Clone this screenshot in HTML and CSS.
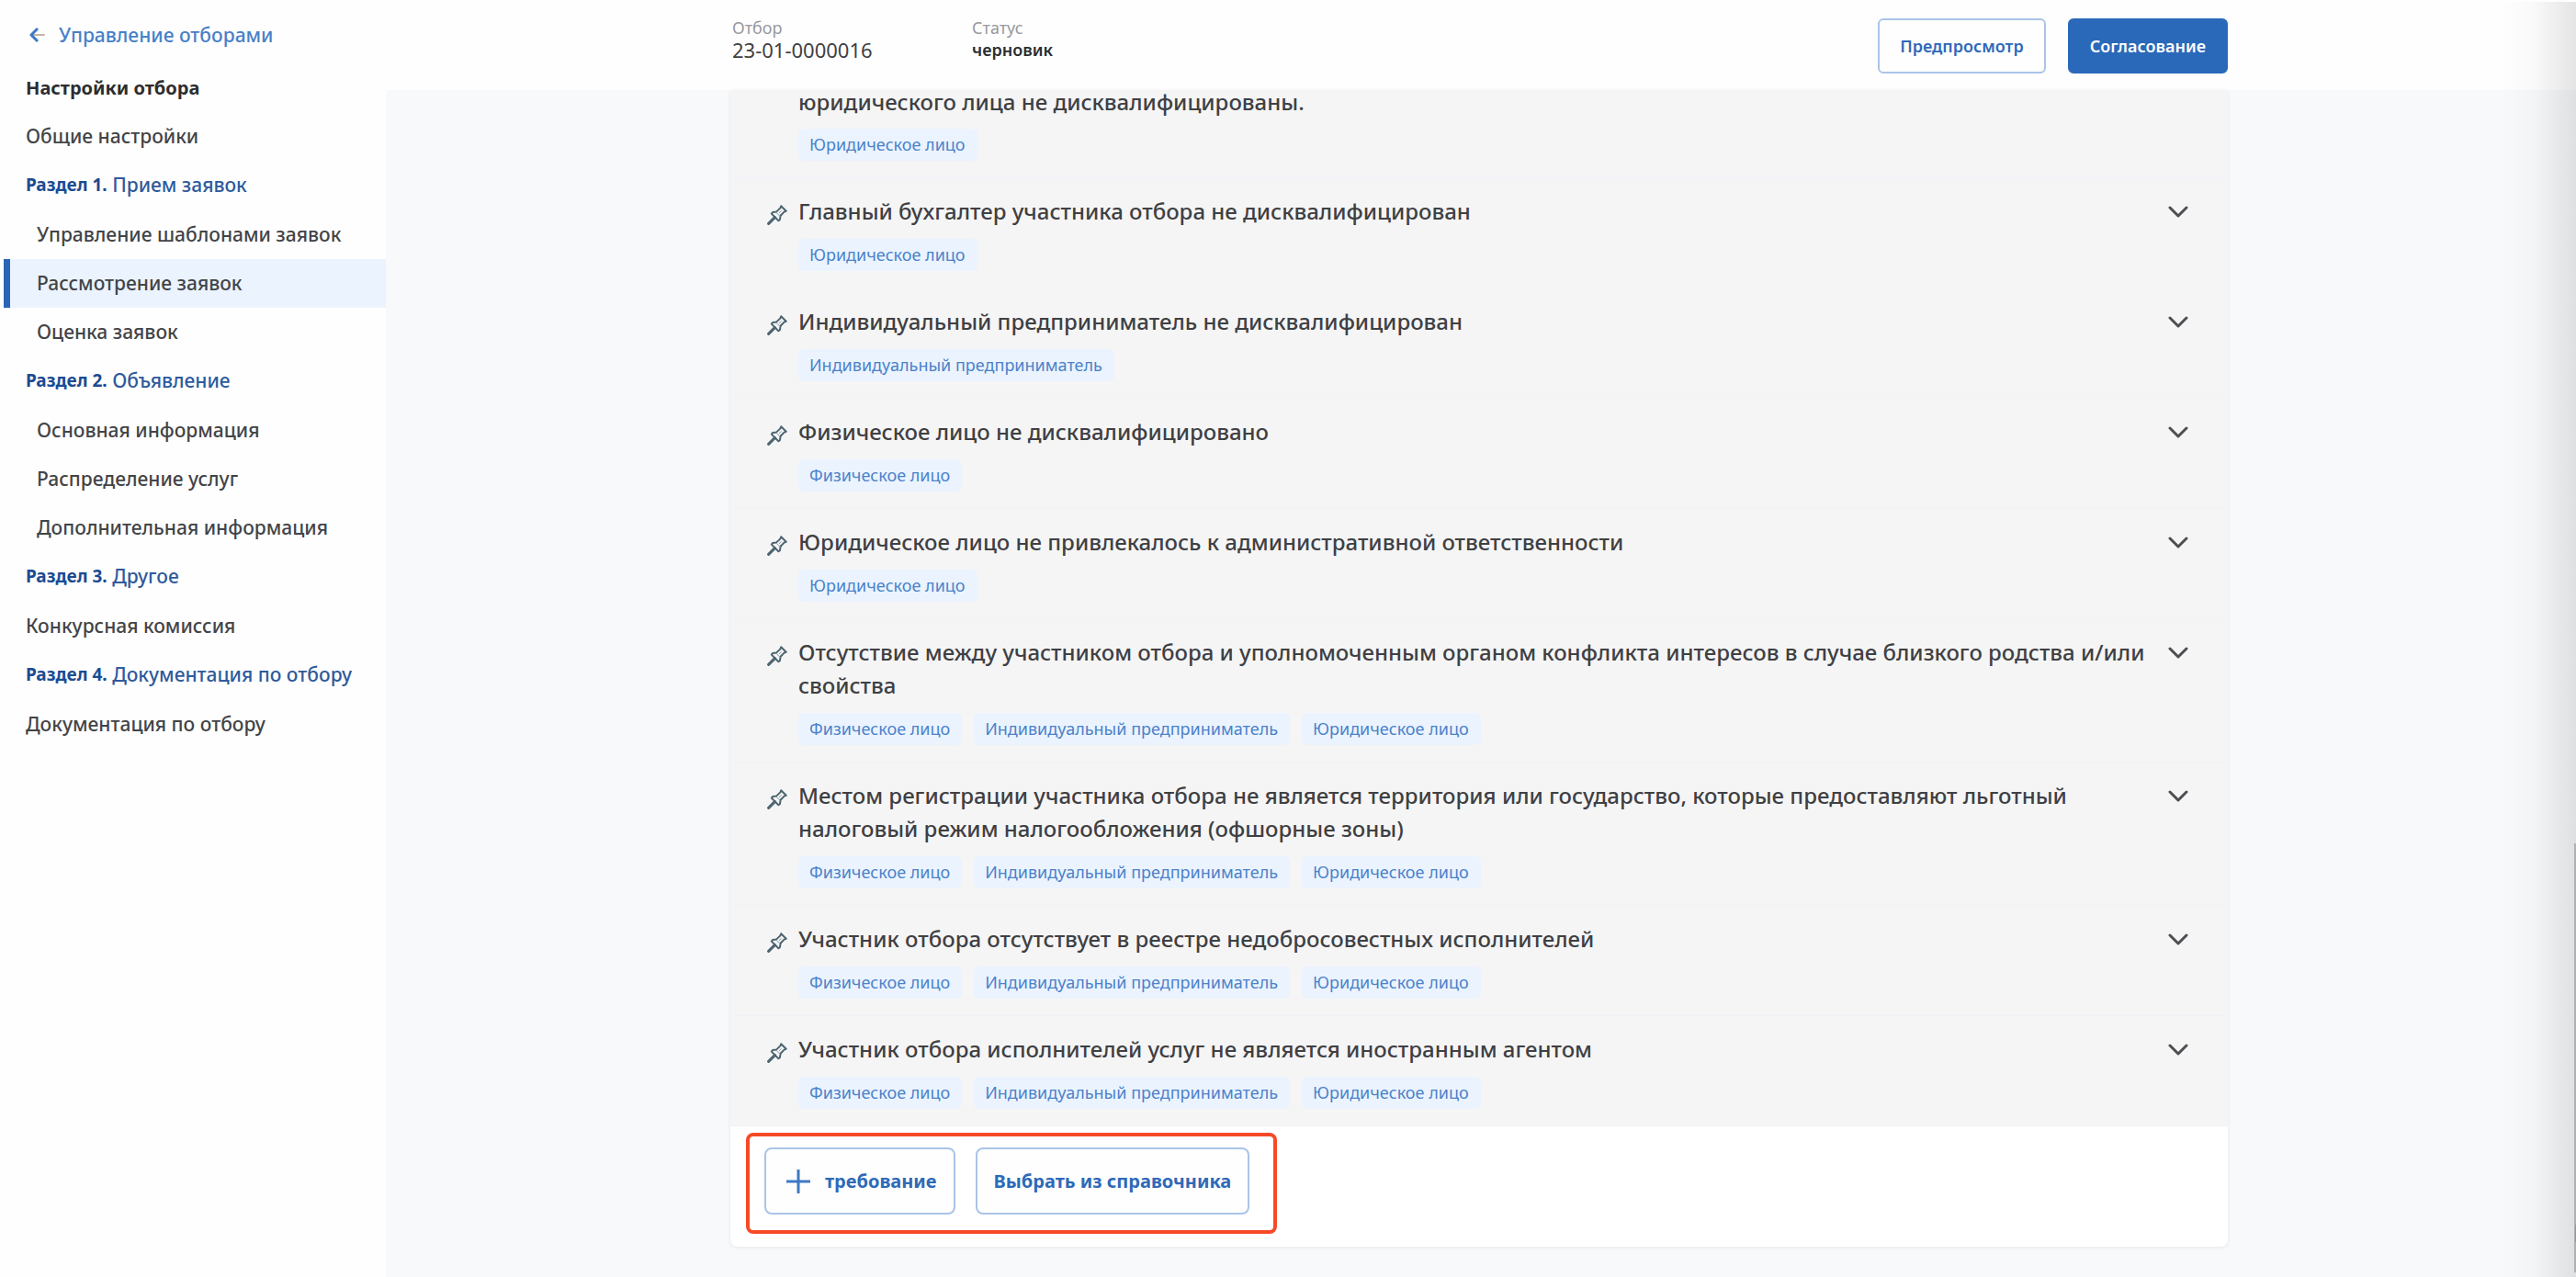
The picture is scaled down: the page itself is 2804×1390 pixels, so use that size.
FILE: index.html
```html
<!DOCTYPE html>
<html lang="ru">
<head>
<meta charset="utf-8">
<title>Рассмотрение заявок</title>
<link rel="stylesheet" href="styles.css">
</head>
<body>
<svg class="sprite" aria-hidden="true">
  <symbol id="pin" viewBox="0 0 22 22">
    <path d="M15.2 1.3 20.7 6.8 18.6 7.6 14.6 11.8 13.9 16.1 12.4 17.2 4.8 9.6 6 8.1 10.2 7.4 14.4 3.4Z" fill="none" stroke="#4d6470" stroke-width="2" stroke-linejoin="round"/>
    <path d="M10 8.2 14 12.2M13 8.8 15.6 6.4" fill="none" stroke="#8a9aa3" stroke-width="1"/>
    <path d="M8.4 13.6 1.6 20.4" fill="none" stroke="#4d6470" stroke-width="3" stroke-linecap="round"/>
  </symbol>
  <symbol id="chevron" viewBox="0 0 22 14">
    <path d="M2 2 11 11 20 2" fill="none" stroke="#4c4e52" stroke-width="3" stroke-linecap="round" stroke-linejoin="round"/>
  </symbol>
</svg>
<div class="app">
  <nav class="sidebar">
    <a class="back" href="#">
      <svg class="back-icon" viewBox="0 0 18 18" aria-hidden="true"><path d="M4 9H16" stroke="#c6b5a8" stroke-width="2" stroke-linecap="round"/><path d="M9 2 2 9 9 16" fill="none" stroke="#3f78c4" stroke-width="3" stroke-linejoin="round"/></svg>
      Управление отборами
    </a>
    <h2 class="nav-title">Настройки отбора</h2>
    <a class="nav-item" href="#">Общие настройки</a>
    <h3 class="nav-section"><b>Раздел 1.</b> Прием заявок</h3>
    <a class="nav-item nested" href="#">Управление шаблонами заявок</a>
    <a class="nav-item nested current" href="#" aria-current="page">Рассмотрение заявок</a>
    <a class="nav-item nested" href="#">Оценка заявок</a>
    <h3 class="nav-section"><b>Раздел 2.</b> Объявление</h3>
    <a class="nav-item nested" href="#">Основная информация</a>
    <a class="nav-item nested" href="#">Распределение услуг</a>
    <a class="nav-item nested" href="#">Дополнительная информация</a>
    <h3 class="nav-section"><b>Раздел 3.</b> Другое</h3>
    <a class="nav-item" href="#">Конкурсная комиссия</a>
    <h3 class="nav-section"><b>Раздел 4.</b> Документация по отбору</h3>
    <a class="nav-item" href="#">Документация по отбору</a>
  </nav>
  <div class="content">
    <header class="topbar">
      <div class="topbar-inner">
        <dl class="facts">
          <div class="fact"><dt>Отбор</dt><dd class="number">23-01-0000016</dd></div>
          <div class="fact"><dt>Статус</dt><dd class="status">черновик</dd></div>
        </dl>
        <div class="actions">
          <button class="button" type="button">Предпросмотр</button>
          <button class="button primary" type="button">Согласование</button>
        </div>
      </div>
    </header>
    <main class="scroll">
      <section class="card">
        <ul class="list">
          <li class="row continued">
            <div class="body"><p class="title">юридического лица не дисквалифицированы.</p>
              <div class="tags"><span class="tag">Юридическое лицо</span></div></div>
          </li>
          <li class="row">
            <svg class="pin" aria-hidden="true"><use href="#pin"/></svg>
            <div class="body"><p class="title">Главный бухгалтер участника отбора не дисквалифицирован</p>
              <div class="tags"><span class="tag">Юридическое лицо</span></div></div>
            <button class="toggle" type="button" aria-label="Развернуть"><svg class="chevron"><use href="#chevron"/></svg></button>
          </li>
          <li class="row">
            <svg class="pin" aria-hidden="true"><use href="#pin"/></svg>
            <div class="body"><p class="title">Индивидуальный предприниматель не дисквалифицирован</p>
              <div class="tags"><span class="tag">Индивидуальный предприниматель</span></div></div>
            <button class="toggle" type="button" aria-label="Развернуть"><svg class="chevron"><use href="#chevron"/></svg></button>
          </li>
          <li class="row">
            <svg class="pin" aria-hidden="true"><use href="#pin"/></svg>
            <div class="body"><p class="title">Физическое лицо не дисквалифицировано</p>
              <div class="tags"><span class="tag">Физическое лицо</span></div></div>
            <button class="toggle" type="button" aria-label="Развернуть"><svg class="chevron"><use href="#chevron"/></svg></button>
          </li>
          <li class="row">
            <svg class="pin" aria-hidden="true"><use href="#pin"/></svg>
            <div class="body"><p class="title">Юридическое лицо не привлекалось к административной ответственности</p>
              <div class="tags"><span class="tag">Юридическое лицо</span></div></div>
            <button class="toggle" type="button" aria-label="Развернуть"><svg class="chevron"><use href="#chevron"/></svg></button>
          </li>
          <li class="row">
            <svg class="pin" aria-hidden="true"><use href="#pin"/></svg>
            <div class="body"><p class="title">Отсутствие между участником отбора и уполномоченным органом конфликта интересов в случае близкого родства и/или свойства</p>
              <div class="tags"><span class="tag">Физическое лицо</span><span class="tag">Индивидуальный предприниматель</span><span class="tag">Юридическое лицо</span></div></div>
            <button class="toggle" type="button" aria-label="Развернуть"><svg class="chevron"><use href="#chevron"/></svg></button>
          </li>
          <li class="row">
            <svg class="pin" aria-hidden="true"><use href="#pin"/></svg>
            <div class="body"><p class="title">Местом регистрации участника отбора не является территория или государство, которые предоставляют льготный налоговый режим налогообложения (офшорные зоны)</p>
              <div class="tags"><span class="tag">Физическое лицо</span><span class="tag">Индивидуальный предприниматель</span><span class="tag">Юридическое лицо</span></div></div>
            <button class="toggle" type="button" aria-label="Развернуть"><svg class="chevron"><use href="#chevron"/></svg></button>
          </li>
          <li class="row">
            <svg class="pin" aria-hidden="true"><use href="#pin"/></svg>
            <div class="body"><p class="title">Участник отбора отсутствует в реестре недобросовестных исполнителей</p>
              <div class="tags"><span class="tag">Физическое лицо</span><span class="tag">Индивидуальный предприниматель</span><span class="tag">Юридическое лицо</span></div></div>
            <button class="toggle" type="button" aria-label="Развернуть"><svg class="chevron"><use href="#chevron"/></svg></button>
          </li>
          <li class="row">
            <svg class="pin" aria-hidden="true"><use href="#pin"/></svg>
            <div class="body"><p class="title">Участник отбора исполнителей услуг не является иностранным агентом</p>
              <div class="tags"><span class="tag">Физическое лицо</span><span class="tag">Индивидуальный предприниматель</span><span class="tag">Юридическое лицо</span></div></div>
            <button class="toggle" type="button" aria-label="Развернуть"><svg class="chevron"><use href="#chevron"/></svg></button>
          </li>
        </ul>
        <footer class="card-footer">
          <div class="highlight">
            <button class="button large" type="button"><svg class="plus" viewBox="0 0 26 26" aria-hidden="true"><path d="M13 0V26M0 13H26" stroke="#3f78c4" stroke-width="3"/></svg>требование</button>
            <button class="button large" type="button">Выбрать из справочника</button>
          </div>
        </footer>
      </section>
    </main>
  </div>
  <div class="edge-shade"><span class="edge-line"></span><span class="edge-mark"></span></div>
</div>
</body>
</html>
```
FILE: styles.css
```css
* {
  box-sizing: border-box;
}

body,
h2,
h3,
p,
dl,
dd,
ul {
  margin: 0;
  padding: 0;
}

body {
  font-family: "Noto Sans", "Open Sans", sans-serif;
  color: #3f4043;
  background: #f8f9fb;
}

.sprite {
  display: none;
}

.app {
  position: relative;
  display: flex;
  min-height: 100vh;
}

/* Sidebar */

.sidebar {
  flex: none;
  width: 420px;
  padding: 18px 0 0 4px;
  background: #fefefe;
  font-size: 21px;
  font-weight: 500;
}

.back,
.nav-title,
.nav-item,
.nav-section {
  display: flex;
  align-items: center;
  text-decoration: none;
  white-space: pre-wrap;
}

.back {
  gap: 14px;
  height: 40px;
  padding-left: 28px;
  color: #4880c8;
  white-space: normal;
}

.back-icon {
  width: 18px;
  height: 18px;
}

.nav-title {
  height: 50px;
  margin: 12px 0 2px;
  padding-left: 24px;
  color: #2c2d30;
  font-size: 20px;
  font-weight: 700;
}

.nav-item {
  height: 53px;
  padding: 0 0 2px 24px;
  color: #434447;
}

.nav-section {
  height: 54px;
  padding: 0 0 2px 24px;
  color: #2f5a9c;
  font-size: 21px;
  font-weight: 500;
}

.nav-section b {
  color: #1c4b92;
  font-size: 19px;
  font-weight: 700;
}

.nested {
  padding-left: 36px;
}

.current {
  padding-left: 29px;
  border-left: 7px solid #2a66b7;
  background: #ebf3fe;
}

/* Header */

.content {
  display: flex;
  flex: 1;
  flex-direction: column;
  min-width: 0;
}

.topbar {
  flex: none;
  padding: 0 8px 0 4px;
  background: #fefefe;
}

.topbar-inner,
.card {
  width: 100%;
  max-width: 1630px;
  margin: 0 auto;
}

.topbar-inner {
  display: flex;
  align-items: flex-start;
  justify-content: space-between;
  padding: 18px 0;
}

.facts {
  display: flex;
}

.fact {
  min-width: 261px;
  padding-left: 2px;
  line-height: 24px;
}

.fact dt {
  color: #97999f;
  font-size: 18px;
}

.number {
  font-size: 22px;
}

.status {
  color: #2c2d30;
  font-size: 18px;
  font-weight: 600;
}

.actions {
  display: flex;
  gap: 24px;
  padding-top: 2px;
}

.button {
  display: flex;
  align-items: center;
  justify-content: center;
  height: 60px;
  padding: 0 22px;
  border: 2px solid #a9c4e8;
  border-radius: 6px;
  background: #fefefe;
  color: #2f69b8;
  font: 600 18px "Noto Sans", "Open Sans", sans-serif;
}

.primary {
  border-color: #2a69b9;
  background: #2a69b9;
  color: #fff;
}

/* Requirements list */

.scroll {
  flex: 1;
  padding: 0 8px 32px 4px;
}

.card {
  border-radius: 0 0 8px 8px;
  background: #fff;
  box-shadow: 0 1px 5px rgba(0, 0, 0, 0.07);
}

.list {
  list-style: none;
  background: #f5f5f5;
}

.row {
  display: flex;
  gap: 12px;
  padding: 18px 43px 18px 40px;
  border-bottom: 1px solid #eff3f8;
}

.continued {
  padding-top: 0;
  padding-left: 74px;
}

.pin {
  flex: none;
  width: 22px;
  height: 22px;
  margin-top: 11px;
}

.body {
  flex: 1;
  min-width: 0;
}

.title {
  font-size: 24px;
  font-weight: 500;
  line-height: 36px;
}

.continued .title {
  line-height: 26px;
}

.tags {
  display: flex;
  flex-wrap: wrap;
  gap: 13px;
  margin-top: 12px;
}

.continued .tags {
  margin-top: 16px;
}

.tag {
  padding: 0 13px 0 12px;
  border-radius: 6px;
  background: #ebf3fe;
  color: #4a82ca;
  font-size: 18px;
  line-height: 35px;
}

.toggle {
  display: flex;
  align-items: center;
  height: 38px;
  padding: 0;
  border: 0;
  background: none;
}

.chevron {
  width: 22px;
  height: 14px;
}

.card-footer {
  display: flex;
  padding: 7px 17px 14px;
}

.highlight {
  display: flex;
  gap: 22px;
  padding: 12px 26px 17px 16px;
  border: 4px solid #f64a27;
  border-radius: 8px;
}

.large {
  gap: 16px;
  height: 73px;
  padding: 0 18px;
  border-radius: 8px;
  font-size: 20px;
  font-weight: 700;
}

.plus {
  width: 26px;
  height: 26px;
  margin-left: 4px;
}

/* Shade along the right edge of the window */

.edge-shade {
  position: absolute;
  top: 2px;
  right: 0;
  bottom: 0;
  width: 84px;
  background: linear-gradient(to right, rgba(0, 0, 0, 0), rgba(0, 0, 0, 0.02) 45%, rgba(0, 0, 0, 0.1));
  pointer-events: none;
}

.edge-line {
  position: absolute;
  top: 66%;
  right: 0;
  bottom: 5px;
  width: 2px;
  background: #b0b0b2;
}

.edge-mark {
  position: absolute;
  right: 0;
  bottom: 38px;
  width: 1px;
  height: 19px;
  background: #5ba4e6;
}
```
